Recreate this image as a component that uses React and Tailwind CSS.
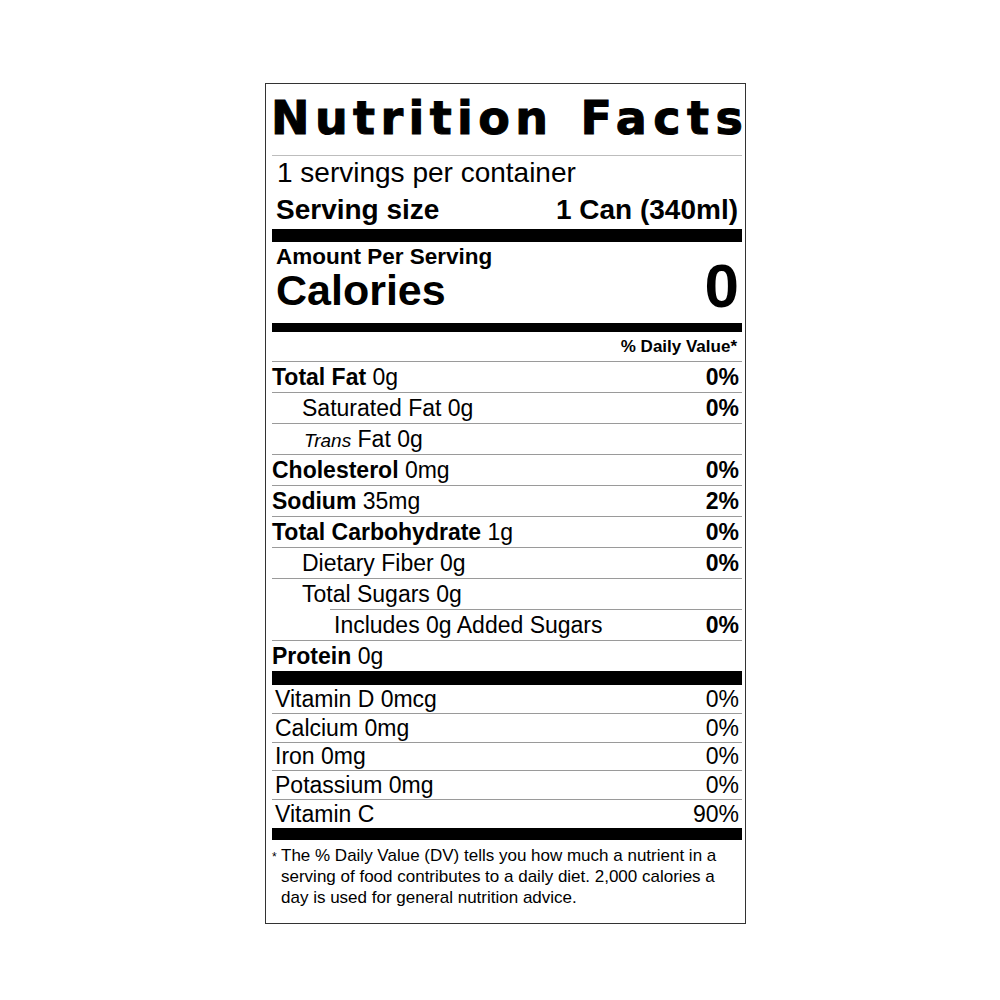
import React from 'react';

const rows = [
  { label: 'Total Fat', amount: '0g', dv: '0%', bold: true },
  { label: 'Saturated Fat', amount: '0g', dv: '0%', indent: 1 },
  { label: 'Trans', amount: 'Fat 0g', dv: '', indent: 1, italic: true },
  { label: 'Cholesterol', amount: '0mg', dv: '0%', bold: true },
  { label: 'Sodium', amount: '35mg', dv: '2%', bold: true },
  { label: 'Total Carbohydrate', amount: '1g', dv: '0%', bold: true },
  { label: 'Dietary Fiber', amount: '0g', dv: '0%', indent: 1 },
  { label: 'Total Sugars', amount: '0g', dv: '', indent: 1 },
  { label: 'Includes 0g Added Sugars', amount: '', dv: '0%', indent: 2 },
  { label: 'Protein', amount: '0g', dv: '', bold: true },
];

const vitamins = [
  { label: 'Vitamin D 0mcg', dv: '0%', h: 'h-[28px]' },
  { label: 'Calcium 0mg', dv: '0%', h: 'h-[29px]' },
  { label: 'Iron 0mg', dv: '0%', h: 'h-[28px]' },
  { label: 'Potassium 0mg', dv: '0%', h: 'h-[29px]' },
  { label: 'Vitamin C', dv: '90%', h: 'h-[29px]' },
];

// one nutrient line, border on top
const NutrientRow = ({ row }) => {
  const indentCls = row.indent === 2 ? 'ml-[58px] pl-[4px]' : row.indent === 1 ? 'pl-[30px]' : '';
  return (
    <div className={`h-[31px] flex items-center justify-between border-t border-[#9a9a9a] ${indentCls}`}>
      <span className="text-[23px] leading-none whitespace-nowrap">
        {row.italic ? (
          <>
            <span className="italic text-[19px] pl-[2px]">{row.label}</span> {row.amount}
          </>
        ) : row.bold ? (
          <>
            <span className="font-bold">{row.label}</span> {row.amount}
          </>
        ) : (
          <>
            {row.label}
            {row.amount ? ` ${row.amount}` : ''}
          </>
        )}
      </span>
      <span className="text-[23px] leading-none font-bold pr-[3px]">{row.dv}</span>
    </div>
  );
};

export default function App() {
  return (
    <div className="w-[1000px] h-[1000px] bg-white font-['Liberation_Sans',Arial,sans-serif] text-black">
      <div className="pt-[83px] pl-[265px]">
        <div className="w-[481px] h-[841px] border border-[#333] pl-[6px] pr-[3px]">
          {/* title */}
          <div className="h-[72px] border-b border-[#bdbdbd] flex items-end pb-[14px]">
            <h1 className="flex gap-[27px] font-['DejaVu_Sans',sans-serif] font-bold text-[46px] leading-none whitespace-nowrap -ml-[1px] [-webkit-text-stroke:1px_black]">
              <span className="tracking-[5.4px]">Nutrition</span>
              <span className="tracking-[6.5px]">Facts</span>
            </h1>
          </div>

          <div className="h-[34px] flex items-end pl-[5px] text-[28px] leading-none pb-[3px]">
            1 servings per container
          </div>
          <div className="h-[39px] flex items-end justify-between pl-[4px] pr-[4px] text-[28px] leading-none font-bold pb-[5px]">
            <span>Serving size</span>
            <span>1 Can (340ml)</span>
          </div>

          <div className="h-[13px] bg-black" />

          <div className="h-[28px] flex items-end pl-[4px] text-[22.5px] leading-none font-bold pb-[2px]">
            Amount Per Serving
          </div>
          <div className="h-[53px] flex items-end justify-between pl-[4px] pr-[3px] font-bold leading-none pb-[11px]">
            <span className="text-[43px] leading-none">Calories</span>
            <span className="text-[62px] leading-none -mb-[5px]">0</span>
          </div>

          <div className="h-[9px] bg-black" />

          <div className="h-[29px] flex items-end justify-end pr-[5px] text-[17px] leading-none font-bold pb-[6px]">
            % Daily Value*
          </div>

          {rows.map((r) => (
            <NutrientRow key={r.label} row={r} />
          ))}

          <div className="h-[14px] bg-black" />

          {vitamins.map((v, i) => (
            <div
              key={v.label}
              className={`${v.h} flex items-center justify-between pl-[3px] pr-[3px] text-[23px] leading-none ${i > 0 ? 'border-t border-[#9a9a9a]' : ''}`}
            >
              <span>{v.label}</span>
              <span>{v.dv}</span>
            </div>
          ))}

          <div className="h-[12px] bg-black" />

          <div className="flex pt-[5px] text-[17px] leading-[21px]">
            <span className="text-[12px] leading-none w-[9px] shrink-0 pt-[6px]">*</span>
            <p className="w-[445px]">
              The % Daily Value (DV) tells you how much a nutrient in a serving of food contributes to a daily
              diet. 2,000 calories a day is used for general nutrition advice.
            </p>
          </div>
        </div>
      </div>
    </div>
  );
}
